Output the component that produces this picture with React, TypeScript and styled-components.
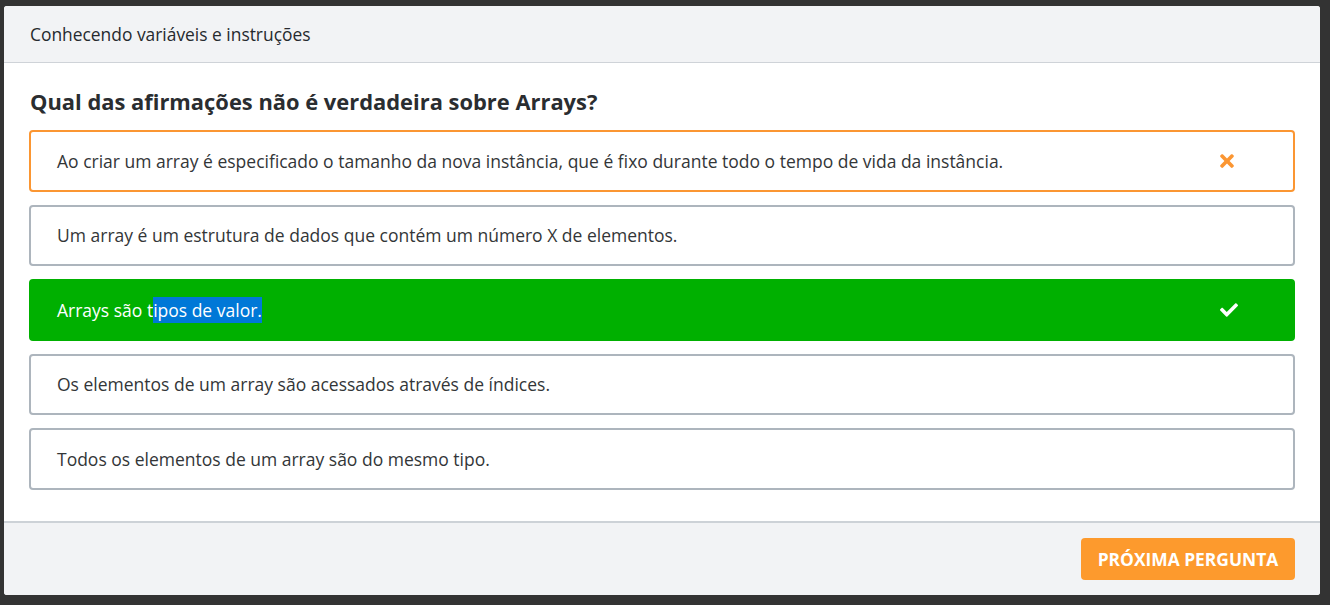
import React from "react";
import styled, { createGlobalStyle } from "styled-components";
import { FaTimes, FaCheck } from "react-icons/fa";

const Global = createGlobalStyle`
  html, body { margin: 0; padding: 0; background: #333333; }
  body { font-family: "Open Sans", "Liberation Sans", sans-serif; }
  #root { min-height: 605px; }
`;

const Page = styled.div`
  padding: 6px 10px 10px 4px;
  box-sizing: border-box;
  height: 605px;
`;

const Modal = styled.div`
  background: #ffffff;
  border-radius: 3px;
  overflow: hidden;
  display: flex;
  flex-direction: column;
  width: 1316px;
  height: 589px;
`;

const Header = styled.div`
  background: #f2f3f5;
  border-bottom: 1px solid #cfd3d8;
  padding: 16px 26px;
  font-size: 17.4px;
  line-height: 24px;
  color: #262a2e;
`;

const Body = styled.div`
  flex: 1;
  padding: 24px 25px 0 25px;
  display: flex;
  flex-direction: column;
`;

const Question = styled.h2`
  margin: 0 0 13px 1px;
  font-size: 21.9px;
  line-height: 30px;
  font-weight: 700;
  color: #2a2d30;
`;

const Options = styled.div`
  display: flex;
  flex-direction: column;
  gap: 13px;
`;

type Variant = "wrong" | "right" | "plain";

const Option = styled.div<{ $variant: Variant }>`
  box-sizing: border-box;
  height: 61.5px;
  display: flex;
  align-items: center;
  padding: 0 27px 0 26px;
  border-radius: 4px;
  font-size: 17.5px;
  line-height: 24px;
  border: 2px solid
    ${(p) =>
      p.$variant === "wrong" ? "#fb9632" : p.$variant === "right" ? "#00b000" : "#adb5bd"};
  background: ${(p) => (p.$variant === "right" ? "#00b000" : "#ffffff")};
  color: ${(p) => (p.$variant === "right" ? "#ffffff" : "#333638")};
`;

const OptionText = styled.span`
  flex: 1;
`;

const Selected = styled.span`
  background: #0078d7;
  color: #ffffff;
  padding: 1px 0;
`;

const IconBox = styled.span<{ $color: string }>`
  width: 46px;
  display: flex;
  align-items: center;
  color: ${(p) => p.$color};
`;

const TimesIcon = styled(FaTimes)`
  width: 14px;
  height: 20px;
`;

const CheckIcon = styled(FaCheck)`
  width: 18px;
  height: 18px;
`;

const Footer = styled.div`
  background: #f2f3f5;
  border-top: 2px solid #cdd2d7;
  height: 74px;
  box-sizing: border-box;
  display: flex;
  justify-content: flex-end;
  align-items: center;
  padding: 0 25px 0 0;
`;

const NextButton = styled.button`
  height: 42px;
  width: 214px;
  border: none;
  border-radius: 4px;
  background: #fd9a2d;
  color: #ffffff;
  font-family: "Open Sans", "Liberation Sans", sans-serif;
  font-weight: 700;
  font-size: 17.4px;
  text-transform: uppercase;
  cursor: pointer;
`;

export default function App() {
  return (
    <>
      <Global />
      <Page>
        <Modal>
          <Header>Conhecendo variáveis e instruções</Header>
          <Body>
            <Question>Qual das afirmações não é verdadeira sobre Arrays?</Question>
            <Options>
              <Option $variant="wrong">
                <OptionText>
                  Ao criar um array é especificado o tamanho da nova instância, que é fixo durante
                  todo o tempo de vida da instância.
                </OptionText>
                <IconBox $color="#fb9632">
                  <TimesIcon />
                </IconBox>
              </Option>
              <Option $variant="plain">
                <OptionText>
                  Um array é um estrutura de dados que contém um número X de elementos.
                </OptionText>
              </Option>
              <Option $variant="right">
                <OptionText>
                  Arrays são t<Selected>ipos de valor.</Selected>
                </OptionText>
                <IconBox $color="#ffffff">
                  <CheckIcon />
                </IconBox>
              </Option>
              <Option $variant="plain">
                <OptionText>Os elementos de um array são acessados através de índices.</OptionText>
              </Option>
              <Option $variant="plain">
                <OptionText>Todos os elementos de um array são do mesmo tipo.</OptionText>
              </Option>
            </Options>
          </Body>
          <Footer>
            <NextButton>Próxima pergunta</NextButton>
          </Footer>
        </Modal>
      </Page>
    </>
  );
}
